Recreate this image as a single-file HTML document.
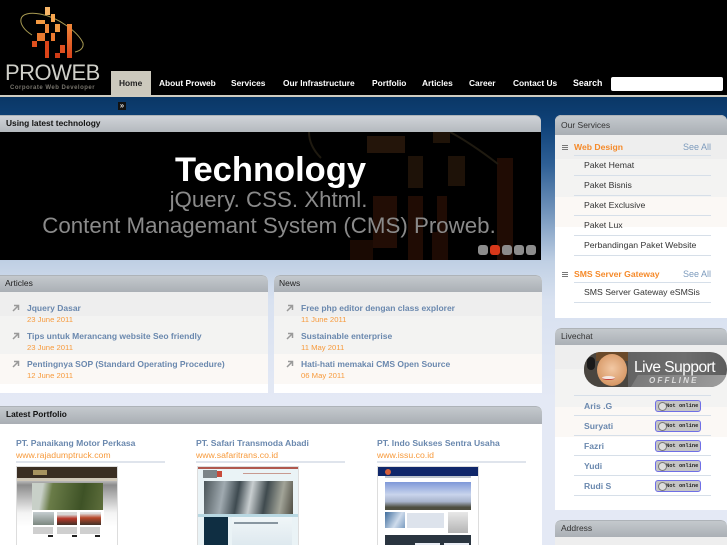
<!DOCTYPE html>
<html><head><meta charset="utf-8"><title>Proweb</title>
<style>
*{box-sizing:border-box;margin:0;padding:0}
html,body{width:727px;height:545px;overflow:hidden}
body{position:relative;font-family:"Liberation Sans",sans-serif;background:linear-gradient(to bottom,#0a3766 97px,#0f4279 125px,#2f6096 165px,#6f92ba 210px,#c0d0e4 262px,#d8e1f0 300px,#e4e9f5 400px);}
.a{position:absolute}
#hd{left:0;top:0;width:727px;height:95px;background:#000}
#ln{left:0;top:95px;width:727px;height:2px;background:#cfccc0}
.nv{position:absolute;top:77px;font-size:8.4px;font-weight:bold;color:#fff;white-space:nowrap;line-height:12px}
#home{left:111px;top:71px;width:40px;height:24px;background:#ccc9bd}
.px{position:absolute}
.card{position:absolute;border-radius:6px 6px 0 0;overflow:hidden;background:#fff}
.h{position:absolute;left:0;top:0;width:100%;background:linear-gradient(to bottom,#c4c9cd,#a9aeb4);border-top:1px solid #aeb3b8;border-radius:6px 6px 0 0;}
.ht{position:absolute;font-size:8.5px;color:#222;white-space:nowrap;line-height:12px}
.b{position:absolute;left:0;width:100%;background:linear-gradient(to bottom,#eeeeee 0,#eeeeee 24px,#f3f3f2 24px,#f3f3f2 62px,#fbf8f5 62px,#fbf8f5 92px,#fff 92px)}
.t{position:absolute;font-size:8.5px;font-weight:bold;color:#6a88ae;white-space:nowrap;line-height:12px}
.d{position:absolute;font-size:7.7px;color:#f79a3c;white-space:nowrap;line-height:10px}
.ar{position:absolute;width:8px;height:8px}
.s{position:absolute;font-size:8.7px;color:#333;white-space:nowrap;line-height:11px}
.o{position:absolute;font-size:8.6px;font-weight:bold;color:#f58a2a;white-space:nowrap;line-height:12px}
.sa{position:absolute;font-size:9px;color:#7d9bbd;white-space:nowrap;line-height:12px}
.m{position:absolute;width:6px;height:5px;border-top:1px solid #777;border-bottom:1px solid #777}
.m:after{content:"";position:absolute;left:0;top:1px;width:6px;height:1px;background:#777}
.bad{position:absolute;left:100px;width:46px;height:12px;border:1px solid #6f6fe6;border-radius:3px;background:#c4c4c4;font:bold 5.4px "Liberation Mono",monospace;color:#222;line-height:10px;padding-left:10px;white-space:nowrap}
.bad:before{content:"";position:absolute;left:2px;top:1px;width:7px;height:7px;border-radius:50%;border:1px solid #777;background:#ddd}
.n{position:absolute;left:29px;font-size:8.6px;font-weight:bold;color:#6a88ae;white-space:nowrap;line-height:12px}
.dot{position:absolute;top:245px;width:10px;height:10px;border-radius:3px;background:#8c8c8c}
.pt{position:absolute;font-size:8.6px;font-weight:bold;color:#6a88ae;white-space:nowrap;line-height:12px;top:437px}
.pu{position:absolute;font-size:8.7px;color:#f79a3c;white-space:nowrap;line-height:12px;top:449px}
.pl{position:absolute;top:461px;width:149px;height:2px;background:#dfe4ec}
.th{position:absolute;top:466px;width:102px;height:80px;background:#fff;border:1px solid #ddd;overflow:hidden}
.th div{position:absolute}
</style></head><body>
<div class="a" id="hd"></div>

<svg class="a" style="left:0;top:0" width="100" height="62" viewBox="0 0 100 62"><path d="M32 35 C24 30 20 24 21 19 C22 14 30 12 40 14 C58 17 78 32 83 43 C84 48 80 51 75 52" fill="none" stroke="#a89a52" stroke-width="1"/></svg>
<div class="px" style="left:45px;top:7px;width:5px;height:8px;background:#f8b668"></div>
<div class="px" style="left:51px;top:14px;width:4px;height:8px;background:#f7a650"></div>
<div class="px" style="left:36px;top:20px;width:9px;height:4px;background:#f59a42"></div>
<div class="px" style="left:45px;top:24px;width:4px;height:9px;background:#f0883a"></div>
<div class="px" style="left:55px;top:24px;width:5px;height:8px;background:#f29a44"></div>
<div class="px" style="left:67px;top:24px;width:5px;height:34px;background:linear-gradient(#f0883a,#d8421a)"></div>
<div class="px" style="left:37px;top:33px;width:8px;height:8px;background:#ea7a30"></div>
<div class="px" style="left:51px;top:33px;width:4px;height:8px;background:#ec7a30"></div>
<div class="px" style="left:32px;top:41px;width:5px;height:6px;background:#e0501e"></div>
<div class="px" style="left:45px;top:41px;width:4px;height:17px;background:#dc4418"></div>
<div class="px" style="left:60px;top:45px;width:5px;height:8px;background:#dd5020"></div>
<div class="px" style="left:55px;top:53px;width:5px;height:5px;background:#d03c16"></div>
<div class="a" style="left:5px;top:61px;font-size:22px;color:#cfcfc8;line-height:24px;white-space:nowrap;letter-spacing:-.5px">PROWEB</div>
<div class="a" style="left:10px;top:85px;font-size:6px;font-weight:bold;color:#77746c;line-height:7px;white-space:nowrap;letter-spacing:.5px">Corporate Web Developer</div>

<div class="a" id="home"></div>
<div class="nv" style="left:119px;color:#222">Home</div>
<div class="nv" style="left:159px">About Proweb</div>
<div class="nv" style="left:231px">Services</div>
<div class="nv" style="left:283px">Our Infrastructure</div>
<div class="nv" style="left:372px">Portfolio</div>
<div class="nv" style="left:422px">Articles</div>
<div class="nv" style="left:469px">Career</div>
<div class="nv" style="left:513px">Contact Us</div>
<div class="nv" style="left:573px;font-size:8.8px">Search</div>
<div class="a" style="left:611px;top:77px;width:112px;height:14px;background:#fff;border-radius:2px"></div>
<div class="a" id="ln"></div>
<div class="a" style="left:118px;top:102px;width:8px;height:8px;background:#111;color:#ddd;font-size:8px;line-height:8px;text-align:center;font-weight:bold">»</div>

<!-- Using latest technology -->
<div class="a h" style="left:0;top:115px;width:541px;height:17px;border-radius:0 6px 0 0;background:linear-gradient(#d0d3d8,#b4b9be)"></div>
<div class="ht" style="left:6px;top:117px;font-weight:bold;color:#111;font-size:8.4px">Using latest technology</div>

<!-- slide -->
<div class="a" style="left:0;top:132px;width:541px;height:128px;background:#000;overflow:hidden">
<div class="a" style="left:367px;top:4px;width:38px;height:17px;background:#24150a"></div>
<div class="a" style="left:433px;top:0;width:17px;height:11px;background:#1f1308"></div>
<div class="a" style="left:408px;top:24px;width:15px;height:32px;background:#1e1208"></div>
<div class="a" style="left:448px;top:24px;width:17px;height:30px;background:#1e1208"></div>
<div class="a" style="left:373px;top:64px;width:24px;height:52px;background:#220d05"></div>
<div class="a" style="left:408px;top:64px;width:15px;height:64px;background:#200c04"></div>
<div class="a" style="left:437px;top:64px;width:10px;height:36px;background:#200c04"></div>
<div class="a" style="left:432px;top:100px;width:16px;height:28px;background:#1e0b04"></div>
<div class="a" style="left:497px;top:26px;width:16px;height:102px;background:#200c04"></div>
<div class="a" style="left:350px;top:108px;width:23px;height:20px;background:#1a0a03"></div>
<svg class="a" style="left:300px;top:0" width="241" height="128"><path d="M9 0 C9 12 15 20 21 26" fill="none" stroke="#1f1a10" stroke-width="2"/><path d="M150 0 C165 8 185 22 198 32" fill="none" stroke="#1f1a10" stroke-width="2"/></svg>
</div>
<div class="a" style="left:0;top:152px;width:541px;text-align:center;font-size:34.5px;font-weight:bold;color:#fff;line-height:36px">Technology</div>
<div class="a" style="left:0;top:188px;width:537px;text-align:center;font-size:22.3px;color:#8a8a8a;line-height:24px;white-space:nowrap">jQuery. CSS. Xhtml.</div>
<div class="a" style="left:0;top:214px;width:538px;text-align:center;font-size:22.3px;color:#8a8a8a;line-height:24px;white-space:nowrap">Content Managemant System (CMS) Proweb.</div>
<div class="dot" style="left:478px"></div><div class="dot" style="left:490px;background:#d8381a"></div><div class="dot" style="left:502px"></div><div class="dot" style="left:514px"></div><div class="dot" style="left:526px"></div>

<!-- Articles -->
<div class="card" style="left:0;top:275px;width:268px;height:118px;border-radius:0 6px 0 0"><div class="h" style="height:18px;border-radius:0 6px 0 0"></div><div class="b" style="top:17px;height:101px"></div></div>
<div class="ht" style="left:5px;top:277px">Articles</div>
<svg class="ar" style="left:12px;top:304px" viewBox="0 0 8 8"><path d="M1 7 L6 2 M2 1.5 H6.5 V6" fill="none" stroke="#999" stroke-width="1.5"/></svg>
<div class="t" style="left:27px;top:302px">Jquery Dasar</div><div class="d" style="left:27px;top:315px">23 June 2011</div>
<svg class="ar" style="left:12px;top:332px" viewBox="0 0 8 8"><path d="M1 7 L6 2 M2 1.5 H6.5 V6" fill="none" stroke="#999" stroke-width="1.5"/></svg>
<div class="t" style="left:27px;top:330px">Tips untuk Merancang website Seo friendly</div><div class="d" style="left:27px;top:343px">23 June 2011</div>
<svg class="ar" style="left:12px;top:360px" viewBox="0 0 8 8"><path d="M1 7 L6 2 M2 1.5 H6.5 V6" fill="none" stroke="#999" stroke-width="1.5"/></svg>
<div class="t" style="left:27px;top:358px">Pentingnya SOP (Standard Operating Procedure)</div><div class="d" style="left:27px;top:371px">12 June 2011</div>

<!-- News -->
<div class="card" style="left:274px;top:275px;width:268px;height:118px"><div class="h" style="height:18px"></div><div class="b" style="top:17px;height:101px"></div></div>
<div class="ht" style="left:279px;top:277px">News</div>
<svg class="ar" style="left:286px;top:304px" viewBox="0 0 8 8"><path d="M1 7 L6 2 M2 1.5 H6.5 V6" fill="none" stroke="#999" stroke-width="1.5"/></svg>
<div class="t" style="left:301px;top:302px">Free php editor dengan class explorer</div><div class="d" style="left:301px;top:315px">11 June 2011</div>
<svg class="ar" style="left:286px;top:332px" viewBox="0 0 8 8"><path d="M1 7 L6 2 M2 1.5 H6.5 V6" fill="none" stroke="#999" stroke-width="1.5"/></svg>
<div class="t" style="left:301px;top:330px">Sustainable enterprise</div><div class="d" style="left:301px;top:343px">11 May 2011</div>
<svg class="ar" style="left:286px;top:360px" viewBox="0 0 8 8"><path d="M1 7 L6 2 M2 1.5 H6.5 V6" fill="none" stroke="#999" stroke-width="1.5"/></svg>
<div class="t" style="left:301px;top:358px">Hati-hati memakai CMS Open Source</div><div class="d" style="left:301px;top:371px">06 May 2011</div>

<!-- Portfolio -->
<div class="card" style="left:0;top:406px;width:542px;height:139px;border-radius:0 6px 0 0"><div class="h" style="height:18px;border-radius:0 6px 0 0"></div></div>
<div class="ht" style="left:6px;top:408px;font-weight:bold;color:#111;font-size:8.3px">Latest Portfolio</div>

<div class="pt" style="left:16px">PT. Panaikang Motor Perkasa</div><div class="pu" style="left:16px">www.rajadumptruck.com</div><div class="pl" style="left:16px"></div>
<div class="pt" style="left:196px">PT. Safari Transmoda Abadi</div><div class="pu" style="left:196px">www.safaritrans.co.id</div><div class="pl" style="left:196px"></div>
<div class="pt" style="left:377px">PT. Indo Sukses Sentra Usaha</div><div class="pu" style="left:377px">www.issu.co.id</div><div class="pl" style="left:377px"></div>

<div class="th" style="left:16px;background:linear-gradient(#b8b8b8 14px,#8c8c8c 18px,#f4f4f4 46px,#fff 60px)">
<div style="left:0;top:0;width:100px;height:11px;background:#3a2e22"></div>
<div style="left:16px;top:3px;width:14px;height:5px;background:#a89460"></div>
<div style="left:0;top:11px;width:100px;height:3px;background:#d0c8b8"></div>
<div style="left:15px;top:16px;width:71px;height:27px;background:linear-gradient(100deg,#c8d0c8 15%,#6a7c48 28%,#3e5226 70%,#5e6e3c)"></div>
<div style="left:15px;top:43px;width:72px;height:37px;background:#fff"></div>
<div style="left:16px;top:45px;width:21px;height:13px;background:linear-gradient(#c5cdd0,#7c8880)"></div>
<div style="left:40px;top:45px;width:20px;height:13px;background:linear-gradient(#d8d8d8 20%,#b8382a 50%,#403028)"></div>
<div style="left:63px;top:45px;width:21px;height:13px;background:linear-gradient(#e0e0e0 10%,#b8482a 45%,#403028)"></div>
<div style="left:16px;top:60px;width:20px;height:7px;background:#cfcfcf"></div>
<div style="left:40px;top:60px;width:20px;height:7px;background:#cfcfcf"></div>
<div style="left:63px;top:60px;width:20px;height:7px;background:#cfcfcf"></div>
<div style="left:31px;top:68px;width:5px;height:2px;background:#222"></div>
<div style="left:55px;top:68px;width:5px;height:2px;background:#222"></div>
<div style="left:78px;top:68px;width:5px;height:2px;background:#222"></div>
</div>
<div class="th" style="left:197px;background:#eaf3f6">
<div style="left:0;top:0;width:100px;height:2px;background:#b0584e"></div>
<div style="left:5px;top:3px;width:14px;height:8px;background:#7d8488"></div>
<div style="left:19px;top:4px;width:5px;height:6px;background:#c84a3a"></div>
<div style="left:45px;top:6px;width:48px;height:1px;background:#c89a90"></div>
<div style="left:6px;top:14px;width:89px;height:33px;background:linear-gradient(100deg,#4a5458,#a0aab0 22%,#3e4a50 38%,#c8ced0 52%,#3f4a4e 68%,#a2a498 85%,#4e4c42)"></div>
<div style="left:0;top:47px;width:100px;height:3px;background:#b9d8e2"></div>
<div style="left:6px;top:50px;width:24px;height:30px;background:#0f2e42"></div>
<div style="left:34px;top:50px;width:60px;height:30px;background:linear-gradient(#f0f6f8,#dde8ee)"></div>
<div style="left:36px;top:55px;width:44px;height:2px;background:#8896a0"></div>
</div>
<div class="th" style="left:377px;background:#fff">
<div style="left:0;top:0;width:100px;height:9px;background:#10276a"></div>
<div style="left:7px;top:2px;width:6px;height:6px;border-radius:50%;background:#d8603a"></div>
<div style="left:7px;top:9px;width:86px;height:2px;background:#bcc4cc"></div>
<div style="left:7px;top:15px;width:86px;height:28px;background:linear-gradient(#7e98d8,#c9d4ec 45%,#a8b4cc 70%,#4e4e40 90%)"></div>
<div style="left:7px;top:45px;width:20px;height:16px;background:linear-gradient(120deg,#3e6c9c,#cfdcec 60%,#7a9cc0)"></div>
<div style="left:29px;top:46px;width:37px;height:15px;background:#dde3ec"></div>
<div style="left:70px;top:45px;width:20px;height:21px;background:linear-gradient(#e8e8e8,#b4b4b4)"></div>
<div style="left:7px;top:68px;width:86px;height:12px;background:#2a3540"></div>
<div style="left:37px;top:76px;width:25px;height:4px;background:#e8ecf4"></div>
<div style="left:66px;top:76px;width:25px;height:4px;background:#e8ecf4"></div>
</div>

<!-- Services -->
<div class="card" style="left:555px;top:115px;width:172px;height:203px"><div class="h" style="height:20px"></div><div class="b" style="top:20px;height:183px"></div></div>
<div class="ht" style="left:561px;top:119px;color:#333">Our Services</div>
<div class="m" style="left:562px;top:145px"></div>
<div class="o" style="left:574px;top:141px">Web Design</div><div class="sa" style="left:683px;top:141px">See All</div>
<div class="a" style="left:574px;top:155px;width:137px;height:1px;background:#d6dfe9"></div>
<div class="s" style="left:584px;top:160px">Paket Hemat</div><div class="a" style="left:574px;top:175px;width:137px;height:1px;background:#d6dfe9"></div>
<div class="s" style="left:584px;top:180px">Paket Bisnis</div><div class="a" style="left:574px;top:195px;width:137px;height:1px;background:#d6dfe9"></div>
<div class="s" style="left:584px;top:200px">Paket Exclusive</div><div class="a" style="left:574px;top:215px;width:137px;height:1px;background:#d6dfe9"></div>
<div class="s" style="left:584px;top:220px">Paket Lux</div><div class="a" style="left:574px;top:235px;width:137px;height:1px;background:#d6dfe9"></div>
<div class="s" style="left:584px;top:240px">Perbandingan Paket Website</div><div class="a" style="left:574px;top:255px;width:137px;height:1px;background:#d6dfe9"></div>
<div class="m" style="left:562px;top:272px"></div>
<div class="o" style="left:574px;top:268px">SMS Server Gateway</div><div class="sa" style="left:683px;top:268px">See All</div>
<div class="a" style="left:574px;top:282px;width:137px;height:1px;background:#d6dfe9"></div>
<div class="s" style="left:584px;top:287px">SMS Server Gateway eSMSis</div><div class="a" style="left:574px;top:302px;width:137px;height:1px;background:#d6dfe9"></div>

<!-- Livechat -->
<div class="card" style="left:555px;top:328px;width:172px;height:182px"><div class="h" style="height:18px"></div><div class="b" style="top:17px;height:165px"></div></div>
<div class="ht" style="left:561px;top:330px;color:#333">Livechat</div>
<div class="a" style="left:584px;top:352px;width:143px;height:35px;border-radius:17px;background:linear-gradient(90deg,#5a5a5a,#6e6e6e 70%,#5c5c5c);overflow:hidden">
<div class="a" style="left:47px;top:23px;width:100px;height:12px;background:linear-gradient(90deg,#7a7a7a,#a0a0a0);transform:skewX(-30deg);transform-origin:0 100%"></div>
<div class="a" style="left:0;top:0;width:44px;height:35px;background:#4a4640"></div>
<div class="a" style="left:12px;top:-1px;width:32px;height:10px;background:#6b4a2a"></div>
<div class="a" style="left:13px;top:2px;width:30px;height:32px;border-radius:50%;background:radial-gradient(circle at 50% 45%,#f2c8a4,#d89a68 70%,#a8703f)"></div>
<div class="a" style="left:3px;top:5px;width:8px;height:13px;border-radius:4px;background:#1a1a1a"></div>
<div class="a" style="left:18px;top:24px;width:13px;height:4px;border-radius:50%;background:#f4e6e0;border-bottom:1px solid #c23f3a"></div>
<div class="a" style="left:50px;top:6px;font-size:15.5px;color:#fff;line-height:20px;white-space:nowrap;letter-spacing:-.5px">Live Support</div>
<div class="a" style="left:65px;top:24px;font-size:8px;font-weight:bold;font-style:italic;color:#ddd;line-height:9px;white-space:nowrap;letter-spacing:2.2px">OFFLINE</div>
</div>
<div class="a" style="left:574px;top:395px;width:137px;height:1px;background:#d6dfe9"></div>
<div style="position:absolute;left:555px;top:0;width:172px;height:0">
<div class="n" style="top:400px">Aris .G</div><div class="bad" style="top:400px">Not online</div>
<div class="n" style="top:420px">Suryati</div><div class="bad" style="top:420px">Not online</div>
<div class="n" style="top:440px">Fazri</div><div class="bad" style="top:440px">Not online</div>
<div class="n" style="top:460px">Yudi</div><div class="bad" style="top:460px">Not online</div>
<div class="n" style="top:480px">Rudi S</div><div class="bad" style="top:480px">Not online</div>
</div>
<div class="a" style="left:574px;top:415px;width:137px;height:1px;background:#d6dfe9"></div>
<div class="a" style="left:574px;top:435px;width:137px;height:1px;background:#d6dfe9"></div>
<div class="a" style="left:574px;top:455px;width:137px;height:1px;background:#d6dfe9"></div>
<div class="a" style="left:574px;top:475px;width:137px;height:1px;background:#d6dfe9"></div>
<div class="a" style="left:574px;top:495px;width:137px;height:1px;background:#d6dfe9"></div>

<!-- Address -->
<div class="card" style="left:555px;top:520px;width:172px;height:25px"><div class="h" style="height:18px"></div><div class="b" style="top:17px;height:8px"></div></div>
<div class="ht" style="left:561px;top:522px;color:#333">Address</div>
</body></html>
